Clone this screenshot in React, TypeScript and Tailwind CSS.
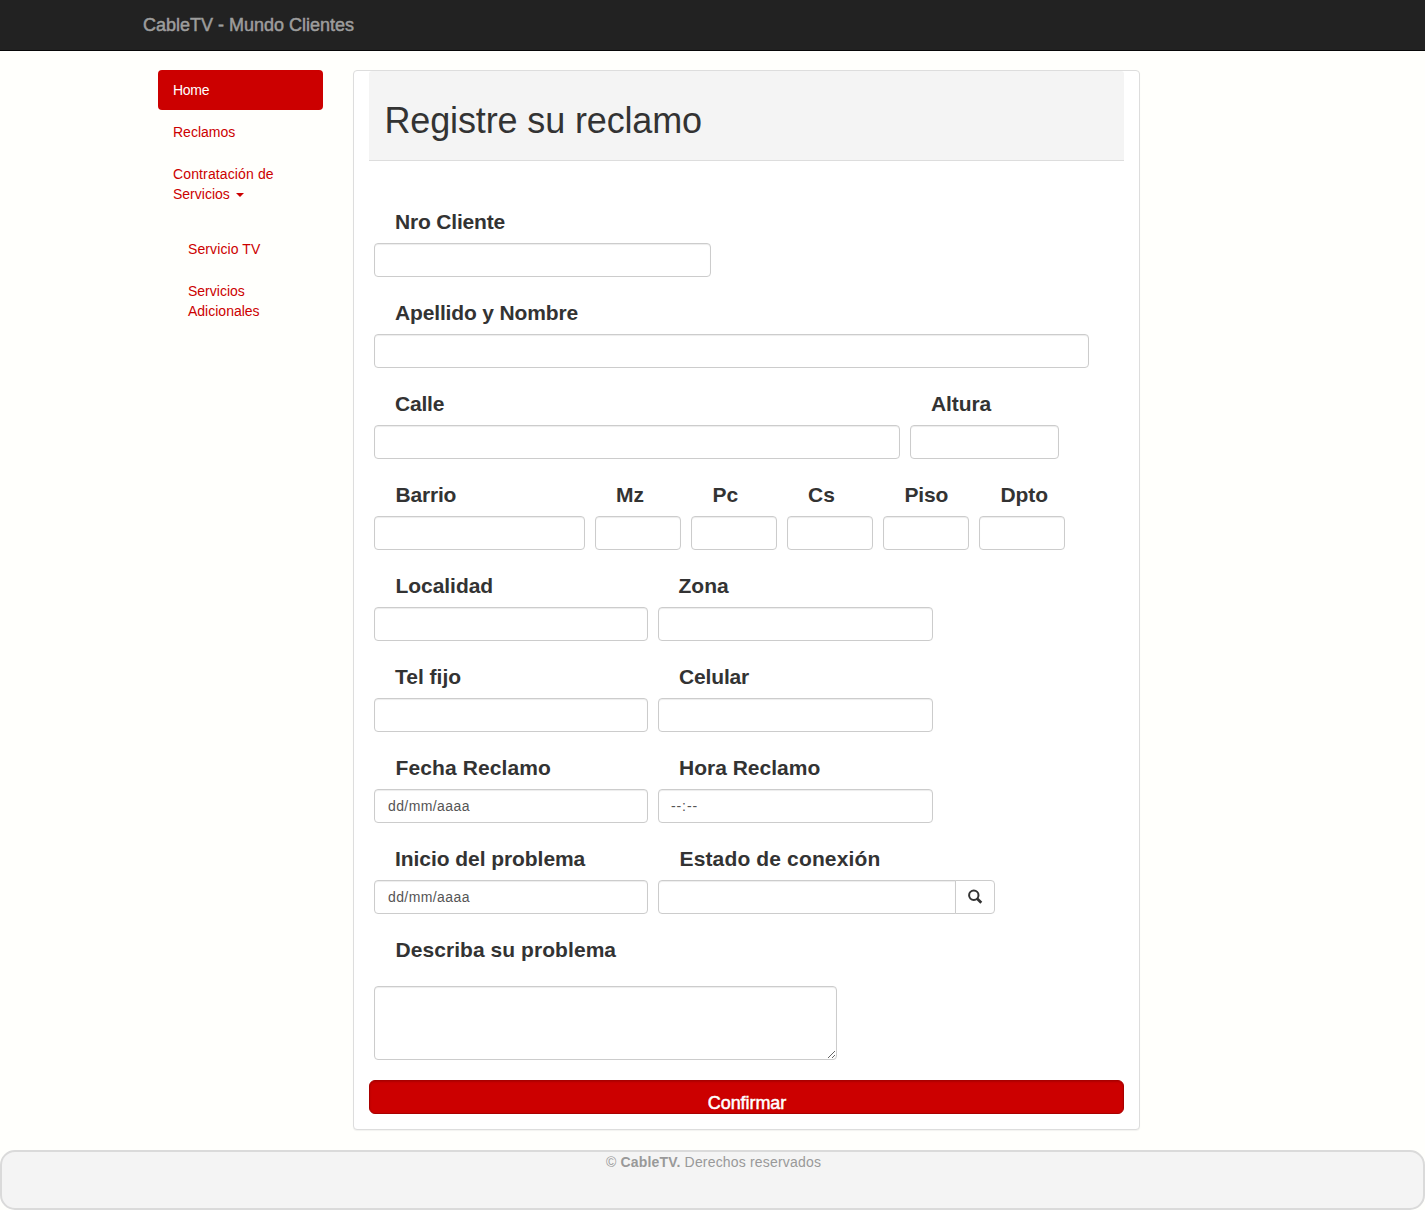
import type { ReactNode } from "react";

const control =
  "block h-[34px] w-full rounded-[4px] border border-[#ccc] bg-white px-3 text-sm text-[#555] shadow-[inset_0_1px_1px_rgba(0,0,0,0.075)] outline-none";

type FieldProps = { label: string; width: string; labelClass?: string; children?: ReactNode };

function Field({ label, width, labelClass = "pl-[21px]", children }: FieldProps) {
  return (
    <div className={`${width} shrink-0`}>
      <label className={`${labelClass} mb-[6px] block h-[31px] whitespace-nowrap text-[21px] font-bold leading-[31px]`}>
        {label}
      </label>
      {children ?? <input className={control} />}
    </div>
  );
}

function Row({ children }: { children: ReactNode }) {
  return <div className="mb-5 flex h-[71px] gap-[10px]">{children}</div>;
}

function Mask({ spacing, children }: { spacing: string; children: ReactNode }) {
  return (
    <div className={`${control} leading-[32px]`}>
      <span className={spacing}>{children}</span>
    </div>
  );
}

export default function App() {
  return (
    <div className="h-[1210px] bg-[#fffffc] font-['Liberation_Sans',Arial,sans-serif] text-sm leading-5 text-[#333]">
      <header className="h-[51px] border-b border-[#080808] bg-[#222] pl-[143px] text-lg leading-[50px] text-[#9d9d9d] [-webkit-text-stroke:0.5px_#9d9d9d]">
        CableTV - Mundo Clientes
      </header>
      <div className="flex h-[1099px] gap-[30px] pl-[158px] pt-[19px]">
        <nav className="w-[165px] text-[#c00]">
          <a className="block rounded-[4px] bg-[#c00] px-[15px] py-[10px] tracking-[-0.3px] text-white">Home</a>
          <a className="mt-[2px] block px-[15px] py-[10px]">Reclamos</a>
          <a className="mt-[2px] block px-[15px] py-[10px]">
            <span className="tracking-[0.13px]">Contratación de</span>
            <br />
            Servicios{" "}
            <span className="ml-[2px] inline-block border-x-4 border-t-4 border-x-transparent border-t-[#c00] align-middle" />
          </a>
          <div className="mt-[15px] pl-[15px]">
            <a className="block px-[15px] py-[10px] tracking-[0.1px]">Servicio TV</a>
            <a className="mt-[2px] block px-[15px] py-[10px]">
              Servicios
              <br />
              Adicionales
            </a>
          </div>
        </nav>
        <main className="h-[1060px] w-[787px] rounded-[4px] border border-[#ddd] bg-white px-[15px] shadow-[0_1px_1px_rgba(0,0,0,0.05)]">
          <div className="h-[90px] rounded-t-[3px] border-b border-[#ddd] bg-[#f4f4f4] px-[15px] pt-[30px]">
            <h1 className="pl-[0.5px] text-[36px] leading-[40px] tracking-[-0.14px]">Registre su reclamo</h1>
          </div>
          <form className="pl-[5px] pt-[45px]">
            <Row>
              <Field label="Nro Cliente" width="w-[337px]" labelClass="pl-[21px] tracking-[-0.18px]" />
            </Row>
            <Row>
              <Field label="Apellido y Nombre" width="w-[715px]" labelClass="pl-[21px] tracking-[-0.15px]" />
            </Row>
            <Row>
              <Field label="Calle" width="w-[526px]" labelClass="pl-[21px] tracking-[-0.2px]" />
              <Field label="Altura" width="w-[149px]" labelClass="pl-[21px] tracking-[-0.1px]" />
            </Row>
            <Row>
              <Field label="Barrio" width="w-[211px]" labelClass="pl-[21.5px] tracking-[-0.2px]" />
              <Field label="Mz" width="w-[86px]" />
              <Field label="Pc" width="w-[86px]" labelClass="pl-[21.5px]" />
              <Field label="Cs" width="w-[86px]" />
              <Field label="Piso" width="w-[86px]" labelClass="pl-[21.5px] tracking-[-0.2px]" />
              <Field label="Dpto" width="w-[86px]" labelClass="pl-[21.5px] tracking-[-0.1px]" />
            </Row>
            <Row>
              <Field label="Localidad" width="w-[274px]" labelClass="pl-[21.5px] tracking-[-0.05px]" />
              <Field label="Zona" width="w-[275px]" labelClass="pl-[20.5px]" />
            </Row>
            <Row>
              <Field label="Tel fijo" width="w-[274px]" />
              <Field label="Celular" width="w-[275px]" labelClass="pl-[21px] tracking-[-0.15px]" />
            </Row>
            <Row>
              <Field label="Fecha Reclamo" width="w-[274px]" labelClass="pl-[21.5px] tracking-[0.1px]">
                <Mask spacing="ml-px tracking-[0.4px]">dd/mm/aaaa</Mask>
              </Field>
              <Field label="Hora Reclamo" width="w-[275px]">
                <Mask spacing="tracking-[0.9px]">--:--</Mask>
              </Field>
            </Row>
            <Row>
              <Field label="Inicio del problema" width="w-[274px]" labelClass="pl-[21px] tracking-[-0.06px]">
                <Mask spacing="ml-px tracking-[0.4px]">dd/mm/aaaa</Mask>
              </Field>
              <Field label="Estado de conexión" width="w-[337px]" labelClass="pl-[21.5px] tracking-[0.14px]">
                <div className="flex">
                  <input className={`${control} rounded-r-none`} />
                  <button
                    type="button"
                    className="-ml-px flex h-[34px] w-10 shrink-0 items-center justify-center rounded-r-[4px] border border-[#ccc] bg-white"
                  >
                    <svg className="overflow-visible" width="14" height="14" viewBox="0 0 14 14" fill="none" stroke="#333">
                      <circle cx="5.8" cy="5.3" r="4.7" strokeWidth="2" />
                      <path d="M9 8.5L13.3 12.8" strokeWidth="2.7" />
                    </svg>
                  </button>
                </div>
              </Field>
            </Row>
            <label className="block h-[52px] pl-[21.5px] text-[21px] font-bold leading-[31px] tracking-[0.06px]">
              Describa su problema
            </label>
            <textarea className="block h-[74px] w-[463px] rounded-[4px] border border-[#ccc] bg-white shadow-[inset_0_1px_1px_rgba(0,0,0,0.075)]" />
          </form>
          <button
            type="button"
            className="mt-5 block h-[34px] w-full rounded-[6px] border border-[#a90000] bg-[#c00] pl-px pt-[10px] text-lg leading-6 tracking-[-0.08px] text-white shadow-[inset_0_1px_2px_rgba(0,0,0,0.15)] [-webkit-text-stroke:0.5px_#fff]"
          >
            Confirmar
          </button>
        </main>
      </div>
      <footer className="h-[60px] rounded-[15px] border-2 border-[#dadada] bg-[#f4f4f4] pl-[2px] text-center tracking-[0.18px] text-[#999]">
        © <b>CableTV.</b> Derechos reservados
      </footer>
    </div>
  );
}
